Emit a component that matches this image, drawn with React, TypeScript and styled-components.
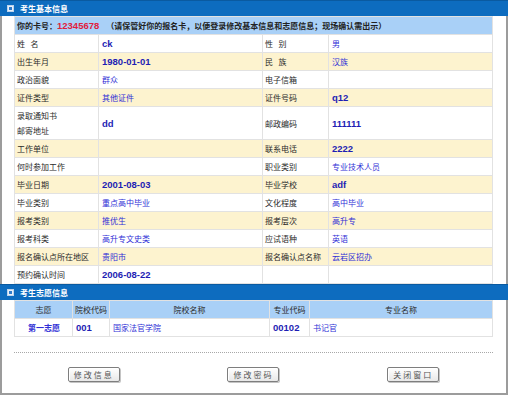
import React from "react";
import styled, { createGlobalStyle } from "styled-components";

const GlobalStyle = createGlobalStyle`
  html, body { margin: 0; padding: 0; background: #fff; }
  body { font-family: "Liberation Sans", "Noto Sans CJK SC", sans-serif; }
`;

const Frame = styled.div`
  box-sizing: border-box;
  width: 508px;
  height: 395px;
  border: 2px solid #9c9c9c;
  border-top: none;
  display: flex;
  flex-direction: column;
  padding: 0 13px 0 12px;
`;

const TitleBar = styled.div`
  height: 16px;
  margin: 0 -15px 0 -14px;
  background: #0d6cbf;
  border-top: 1px solid #0a5aa0;
  box-sizing: border-box;
  display: flex;
  align-items: center;
  gap: 6px;
  padding-left: 7px;
  color: #fff;
  font-family: "Noto Sans CJK SC", sans-serif;
  font-size: 8px;
  font-weight: bold;
`;

const Grid = styled.div<{ $cols: string }>`
  display: grid;
  grid-template-columns: ${(p) => p.$cols};
  gap: 1px;
  padding: 1px;
  background: #e2e2e2;
`;

type Tone = "white" | "cream" | "blue";
const toneBg: Record<Tone, string> = {
  white: "#ffffff",
  cream: "#fdf3cf",
  blue: "#a9d0f7",
};

const Cell = styled.div<{ $tone: Tone; $h?: number; $center?: boolean; $span?: number }>`
  background: ${(p) => toneBg[p.$tone]};
  height: ${(p) => p.$h ?? 17}px;
  grid-column: span ${(p) => p.$span ?? 1};
  display: flex;
  align-items: center;
  justify-content: ${(p) => (p.$center ? "center" : "flex-start")};
  padding: 0 2px;
  box-sizing: border-box;
  overflow: hidden;
  white-space: nowrap;
`;

const Label = styled.span`
  font-family: "Noto Sans CJK SC", sans-serif;
  font-size: 8px;
  line-height: 15px;
  color: #2a2a2a;
  white-space: pre-line;
`;

const Value = styled.span<{ $latin: boolean; $strong?: boolean }>`
  font-family: ${(p) =>
    p.$latin ? `"Liberation Sans", sans-serif` : `"Noto Sans CJK SC", sans-serif`};
  font-size: ${(p) => (p.$latin ? "9.5px" : "8px")};
  font-weight: ${(p) => (p.$latin || p.$strong ? "bold" : "normal")};
  color: ${(p) => (p.$latin ? "#1e1eb4" : "#2f2fd6")};
  padding-left: 1px;
`;

const CardText = styled.span`
  font-family: "Noto Sans CJK SC", sans-serif;
  font-size: 8px;
  font-weight: bold;
  color: #222;
`;

const CardNo = styled.span`
  font-family: "Liberation Sans", sans-serif;
  font-size: 9.5px;
  font-weight: bold;
  color: #e0203c;
`;

const Note = styled(CardText)`
  margin-left: 7px;
`;

const Divider = styled.div`
  margin-top: 15px;
  border-top: 1px dotted #a8a8a8;
`;

const ButtonRow = styled.div`
  display: grid;
  grid-template-columns: repeat(3, 1fr);
  justify-items: center;
  margin-top: 14px;
`;

const Button = styled.button`
  width: 52px;
  height: 15px;
  padding: 0;
  border: 1px solid #7e7e7e;
  border-radius: 2px;
  background: linear-gradient(#ffffff, #e8e8e8);
  box-shadow: 1px 1px 0 #c4c4c4, inset 1px 1px 0 #fff;
  font-family: "Noto Sans CJK SC", sans-serif;
  font-size: 8px;
  letter-spacing: 2px;
  color: #555;
  line-height: 13px;
`;

function TitleIcon() {
  return (
    <svg width="7" height="7" viewBox="0 0 7 7">
      <rect x="0.5" y="0.5" width="6" height="6" fill="#e8f0fa" stroke="#bcd3ec" />
      <rect x="2" y="2" width="3" height="3" fill="#2f7ccc" />
    </svg>
  );
}

const isLatin = (s: string) => /^[\x00-\x7f]+$/.test(s);

type Row = { cells: [string, string, string, string]; h?: number };

const rows: Row[] = [
  { cells: ["姓\u2002\u2009名", "ck", "性\u2002\u2009别", "男"] },
  { cells: ["出生年月", "1980-01-01", "民\u2002\u2009族", "汉族"] },
  { cells: ["政治面貌", "群众", "电子信箱", ""] },
  { cells: ["证件类型", "其他证件", "证件号码", "q12"] },
  { cells: ["录取通知书\n邮寄地址", "dd", "邮政编码", "111111"], h: 32 },
  { cells: ["工作单位", "", "联系电话", "2222"] },
  { cells: ["何时参加工作", "", "职业类别", "专业技术人员"] },
  { cells: ["毕业日期", "2001-08-03", "毕业学校", "adf"] },
  { cells: ["毕业类别", "重点高中毕业", "文化程度", "高中毕业"] },
  { cells: ["报考类别", "推优生", "报考层次", "高升专"] },
  { cells: ["报考科类", "高升专文史类", "应试语种", "英语"] },
  { cells: ["报名确认点所在地区", "贵阳市", "报名确认点名称", "云岩区招办"] },
  { cells: ["预约确认时间", "2006-08-22", "", ""] },
];

const choiceHead = ["志愿", "院校代码", "院校名称", "专业代码", "专业名称"];
const choiceRow = ["第一志愿", "001", "国家法官学院", "00102", "书记官"];

export default function App() {
  return (
    <>
      <GlobalStyle />
      <Frame>
        <TitleBar>
          <TitleIcon />
          考生基本信息
        </TitleBar>
        <Grid $cols="83px 163px 65px 1fr">
          <Cell $tone="blue" $span={4}>
            <CardText>你的卡号：</CardText>
            <CardNo>12345678</CardNo>
            <Note>（请保管好你的报名卡，以便登录修改基本信息和志愿信息；现场确认需出示）</Note>
          </Cell>
          {rows.map((r, i) => {
            const tone: Tone = i % 2 === 0 ? "white" : "cream";
            return r.cells.map((c, j) => (
              <Cell key={`${i}-${j}`} $tone={tone} $h={r.h}>
                {j % 2 === 0 ? (
                  <Label>{c}</Label>
                ) : (
                  c && <Value $latin={isLatin(c)}>{c}</Value>
                )}
              </Cell>
            ));
          })}
        </Grid>
        <TitleBar>
          <TitleIcon />
          考生志愿信息
        </TitleBar>
        <Grid $cols="57px 36px 159px 39px 1fr">
          {choiceHead.map((h) => (
            <Cell key={h} $tone="blue" $center>
              <Label>{h}</Label>
            </Cell>
          ))}
          {choiceRow.map((c, j) => (
            <Cell key={c} $tone="white" $center={j === 0}>
              <Value $latin={isLatin(c)} $strong={j === 0}>
                {c}
              </Value>
            </Cell>
          ))}
        </Grid>
        <Divider />
        <ButtonRow>
          <Button>修改信息</Button>
          <Button>修改密码</Button>
          <Button>关闭窗口</Button>
        </ButtonRow>
      </Frame>
    </>
  );
}
